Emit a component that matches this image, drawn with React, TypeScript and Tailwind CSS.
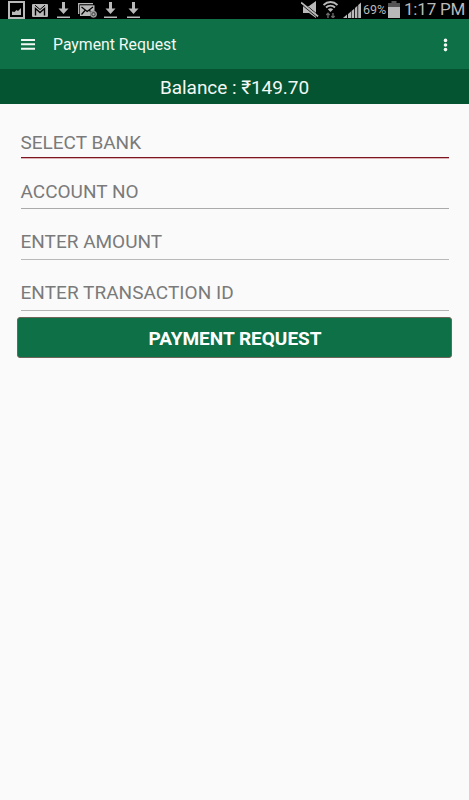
import React from 'react';

const ICON = '#b9b9b9';

const PictureIcon = () => (
    <svg width="17" height="18" viewBox="0 0 17 18" fill="none">
        <path d="M1 1h15v16H1z" stroke={ICON} strokeWidth="2" />
        <path d="M4 14v-3.500l2.500.5 2-2 1.500 1 3-3v7z" fill={ICON} />
    </svg>
);

const GmailIcon = () => (
    <svg width="16" height="13" viewBox="0 0 16 13" fill="none">
        <rect width="16" height="13" rx="1" fill={ICON} />
        <path d="M3.500 11.500V4.500L8 8.500l4.500-4v7" stroke="#000" strokeWidth="1.400" />
        <path d="M3 1.200L8 5.500l5-4.300" stroke="#000" strokeWidth="1" />
    </svg>
);

const DownloadIcon = () => (
    <svg width="13" height="16" viewBox="0 0 13 16" fill={ICON}>
        <path d="M5 0h3v6.500h3.500l-5 5.500-5-5.500H5z" />
        <path d="M0 14.500h13V16H0z" />
    </svg>
);

const MailIcon = () => (
    <svg width="19" height="15" viewBox="0 0 19 15" fill="none">
        <path d="M.7 11V.7H15" stroke={ICON} strokeWidth="1.300" />
        <rect x="2" y="2.300" width="14.500" height="10.700" fill={ICON} />
        <path d="M3.500 4l5.700 4.500L15 4M3.500 11.500l3.500-4M11.500 7.500l1 1" stroke="#000" strokeWidth="1.200" />
        <circle cx="15.500" cy="11.200" r="3.500" fill="#555" />
        <circle cx="15.500" cy="11.200" r="2.800" stroke={ICON} strokeWidth=".9" />
        <circle cx="15.500" cy="11.200" r="1" fill={ICON} />
    </svg>
);

const MuteIcon = () => (
    <svg width="18" height="17" viewBox="0 0 18 17">
        <path d="M2 5h6l7-5v17l-7-5H2z" fill={ICON} />
        <path d="M1 .8l17 14" stroke="#000" strokeWidth="1" />
        <path d="M0 1.500l17 14" stroke={ICON} strokeWidth="1.900" />
        <path d="M0 3.100l16 13.200" stroke="#000" strokeWidth=".8" />
    </svg>
);

const WifiIcon = () => (
    <svg width="15" height="17" viewBox="0 0 15 17" fill="none">
        <path d="M.5 4c4-4 10-4 14 0M3 6.500c2.500-2.500 6.500-2.500 9 0" stroke={ICON} strokeWidth="1.800" />
        <path d="M4.800 8.300c1.500-1.500 3.900-1.500 5.400 0L7.500 11z" fill={ICON} />
        <path d="M5 17v-4.500M3.300 14L5 12.300 6.700 14M10 12v4.500M8.300 15l1.700 1.700 1.700-1.700" stroke="#686868" strokeWidth="1.400" />
    </svg>
);

const SignalIcon = () => (
    <svg width="18" height="16" viewBox="0 0 18 16" fill={ICON}>
        <path d="M0 16l4-3.500V16z" />
        <path d="M5 12l3-2.500V16H5zM8.600 9l2.600-2.300V16H8.600zM12 6l2.400-2.200V16H12zM15.200 3L18 .5V16h-2.800z" />
    </svg>
);

const BatteryIcon = () => (
    <svg width="12" height="17" viewBox="0 0 12 17">
        <path d="M3.500 0h5v2H12v4H0V2h3.500z" fill="#555" />
        <path d="M0 6h12v11H0z" fill={ICON} />
    </svg>
);

const StatusBar = () => (
    <div className="flex h-[19px] items-start bg-black pl-2 pr-1 text-[#b9b9b9]">
        <div className="flex items-start">
            <div className="mt-px"><PictureIcon /></div>
            <div className="ml-[7px] mt-1"><GmailIcon /></div>
            <div className="ml-[9px] mt-0.5"><DownloadIcon /></div>
            <div className="ml-2 mt-[3px]"><MailIcon /></div>
            <div className="ml-[7px] mt-0.5"><DownloadIcon /></div>
            <div className="ml-[10px] mt-0.5"><DownloadIcon /></div>
        </div>
        <div className="ml-auto flex items-start">
            <div className="mt-px"><MuteIcon /></div>
            <div className="ml-1 mt-px"><WifiIcon /></div>
            <div className="ml-[5px] mt-0.5"><SignalIcon /></div>
            <span className="ml-0.5 w-[25px] text-[12.5px] leading-[19px]">69%</span>
            <div className="mt-px"><BatteryIcon /></div>
            <span className="ml-1 w-[61px] whitespace-nowrap text-[17px] leading-[19px] tracking-[-0.2px]">1:17 PM</span>
        </div>
    </div>
);

const AppBar = () => (
    <header className="flex h-[50px] items-center bg-[#0d7046] pl-[21px] pr-5 text-[#f2f8f5]">
        <svg width="14" height="12" viewBox="0 0 14 12" fill="currentColor">
            <path d="M0 1h14v2H0zM0 5.300h14v2H0zM0 9.700h14v2H0z" />
        </svg>
        <h1 className="ml-[18px] pt-px text-[15.8px]">Payment Request</h1>
        <svg className="ml-auto mt-px" width="7" height="14" viewBox="0 0 7 14" fill="currentColor">
            <circle cx="3.500" cy="2.400" r="1.800" />
            <circle cx="3.500" cy="7" r="1.800" />
            <circle cx="3.500" cy="11.600" r="1.800" />
        </svg>
    </header>
);

const App = () => {
    return (
        <div className="h-[800px] w-full overflow-hidden bg-[#fafafa] font-['Roboto','Noto_Sans',sans-serif]">
            <StatusBar />
            <AppBar />
            <div className="flex h-[35px] items-center justify-center bg-[#055431] pt-[3px] text-[19px] tracking-[-0.05px] text-[#f2f8f5]">
                Balance : ₹149.70
            </div>
            <form className="px-[17px] pt-[23px] text-[19px] text-[#7a7a7a]">
                <div className="mx-[3.500px] h-[31px] border-b border-[#7d1520] leading-[31px] shadow-[0_1px_0_#dcb4b8]">SELECT BANK</div>
                <div className="mx-[3.500px] mt-4 h-[35px] border-b border-[#aaaaaa] leading-[35px]">ACCOUNT NO</div>
                <div className="mx-[3.500px] mt-4 h-[35px] border-b border-[#b9b9b9] leading-[34px]">ENTER AMOUNT</div>
                <div className="mx-[3.500px] mt-4 h-[35px] border-b border-[#b4b4b4] leading-[34px] tracking-[0.04px]">ENTER TRANSACTION ID</div>
                <button type="button" className="mt-1.5 block h-[41px] w-[435px] rounded-[3px] border border-[#6c6558] bg-[#0d7046] pl-px pt-[3px] text-[19px] font-bold text-white">
                    PAYMENT REQUEST
                </button>
            </form>
        </div>
    );
};

export default App;
